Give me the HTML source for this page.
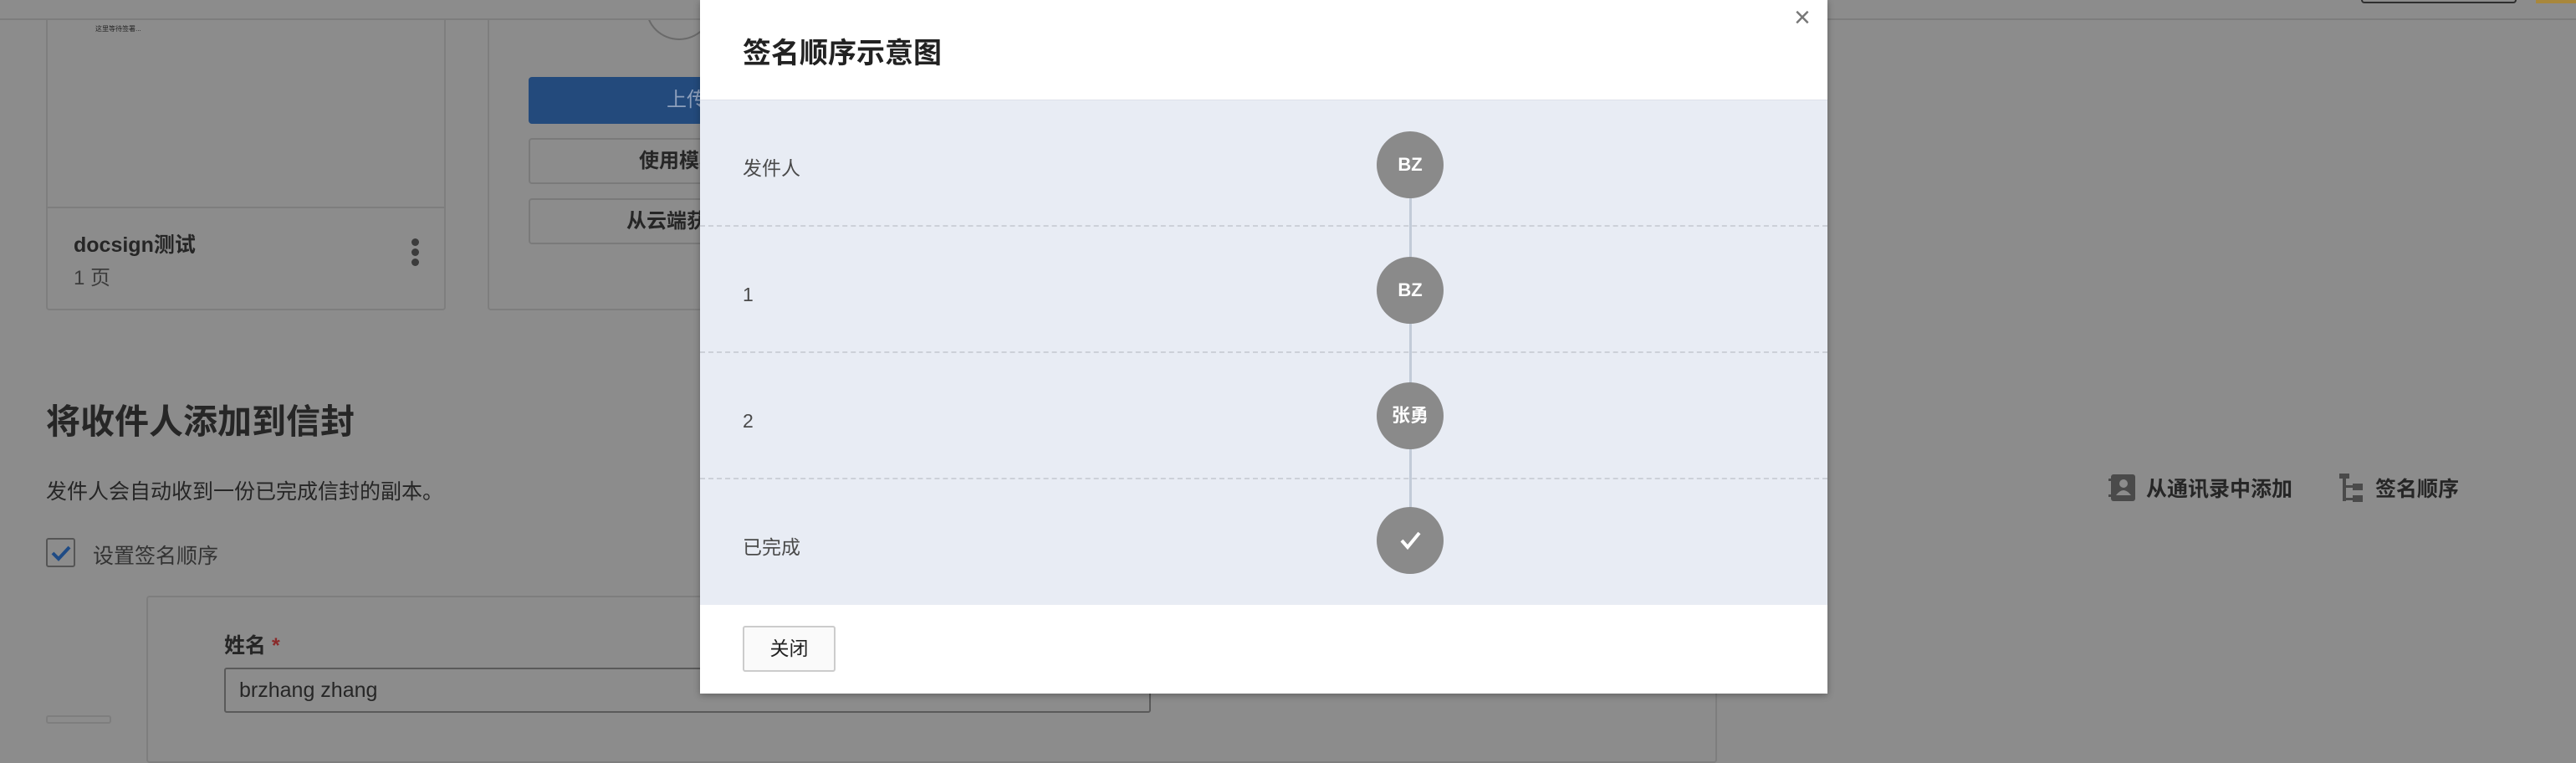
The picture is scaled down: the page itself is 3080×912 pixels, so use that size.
<!DOCTYPE html>
<html><head><meta charset="utf-8"><style>
*{box-sizing:border-box;margin:0;padding:0}
body{width:3080px;height:858px;overflow:hidden;background:#8c8c8c;font-family:"Liberation Sans","Noto Sans CJK SC",sans-serif;color:#262626;position:relative}
.a{position:absolute}
.card{border:2px solid #7e7e7e;border-radius:4px;background:#8c8c8c}
.btn{position:absolute;border:2px solid #7a7a7a;border-radius:4px;font-size:24px;font-weight:bold;text-align:center;color:#262626}
.row{position:absolute;left:0;width:1348px;height:151px;border-bottom:2px dashed #ccd0d8}
.row span{position:absolute;left:51px;top:6px;line-height:151px;font-size:23px;color:#4a4a4a}
.c{position:absolute;left:809px;width:80px;height:80px;border-radius:50%;background:#8a8a8a;color:#fff;font-weight:bold;font-size:22px;text-align:center;line-height:80px}
</style></head><body>
<div class="a card" style="left:55px;top:-20px;width:478px;height:391px"></div>
<div class="a" style="left:57px;top:247px;width:474px;height:2px;background:#7e7e7e"></div>
<div class="a" style="left:114px;top:29px;font-size:8px">这里等待签署...</div>
<div class="a" style="left:88px;top:273px;font-size:25px;font-weight:bold">docsign测试</div>
<div class="a" style="left:88px;top:312px;font-size:24px;color:#3c3c3c">1 页</div>
<div class="a" style="left:492px;top:285px;width:9px;height:9px;border-radius:50%;background:#3c3c3c;box-shadow:0 12px 0 #3c3c3c,0 24px 0 #3c3c3c"></div>
<div class="a card" style="left:583px;top:-20px;width:300px;height:391px"></div>
<div class="a" style="left:772px;top:-30px;width:80px;height:78px;border-radius:50%;border:2px solid #6a6a6a"></div>
<div class="a" style="left:0;top:0;width:3080px;height:24px;background:#8c8c8c;border-bottom:2px solid #7d7d7d"></div>
<div class="a" style="left:2823px;top:-4px;width:186px;height:8px;border:2px solid #2e2e2e;border-radius:4px"></div>
<div class="a" style="left:3032px;top:0;width:48px;height:4px;background:#a8873c"></div>
<div class="a" style="left:632px;top:92px;width:260px;height:56px;background:#234a7c;border-radius:4px;color:#8ea0bc;font-size:24px;line-height:56px;padding-left:165px">上传</div>
<div class="btn" style="left:632px;top:165px;width:260px;height:55px;line-height:51px;padding-left:130px;text-align:left">使用模板</div>
<div class="btn" style="left:632px;top:237px;width:260px;height:55px;line-height:51px;padding-left:115px;text-align:left">从云端获取</div>
<div class="a" style="left:55px;top:470px;font-size:41px;font-weight:bold">将收件人添加到信封</div>
<div class="a" style="left:55px;top:568px;font-size:25px">发件人会自动收到一份已完成信封的副本。</div>
<div class="a" style="left:55px;top:643px;width:35px;height:35px;border:2px solid #555;border-radius:3px"></div>
<svg class="a" style="left:59px;top:648px" width="28" height="26" viewBox="0 0 28 26"><path d="M4 13 L11 20 L24 6" stroke="#1f4b85" stroke-width="4" fill="none"/></svg>
<div class="a" style="left:111px;top:645px;font-size:25px;color:#333">设置签名顺序</div>
<div class="a" style="left:175px;top:712px;width:1878px;height:200px;border:2px solid #7e7e7e;border-radius:4px"></div>
<div class="a" style="left:268px;top:752px;font-size:25px;font-weight:bold">姓名 <span style="color:#8a2a2a">*</span></div>
<div class="a" style="left:268px;top:798px;width:1108px;height:54px;border:2px solid #5a5a5a;border-radius:3px;font-size:25px;line-height:50px;padding-left:16px">brzhang zhang</div>
<div class="a" style="left:55px;top:855px;width:78px;height:10px;border:2px solid #7e7e7e;border-radius:3px"></div>
<svg class="a" style="left:2521px;top:566px" width="34" height="34" viewBox="0 0 34 34"><rect x="3" y="1" width="29" height="32" rx="3" fill="#4a4a4a"/><rect x="0" y="6" width="5" height="3" fill="#4a4a4a"/><rect x="0" y="25" width="5" height="3" fill="#4a4a4a"/><circle cx="18" cy="12" r="5" fill="#8c8c8c"/><path d="M9 26 Q18 14 27 26Z" fill="#8c8c8c"/></svg>
<div class="a" style="left:2566px;top:565px;font-size:25px;font-weight:bold;color:#262626">从通讯录中添加</div>
<svg class="a" style="left:2797px;top:566px" width="30" height="34" viewBox="0 0 30 34"><rect x="0" y="0" width="12" height="6" fill="#4a4a4a"/><rect x="4" y="0" width="4" height="33" fill="#4a4a4a"/><rect x="4" y="14" width="14" height="3" fill="#4a4a4a"/><rect x="16" y="12" width="12" height="8" fill="#4a4a4a"/><rect x="4" y="29" width="14" height="3" fill="#4a4a4a"/><rect x="16" y="26" width="12" height="8" fill="#4a4a4a"/></svg>
<div class="a" style="left:2840px;top:565px;font-size:25px;font-weight:bold;color:#262626">签名顺序</div>

<div class="a" style="left:837px;top:0;width:1348px;height:829px;background:#fff;box-shadow:0 2px 8px rgba(0,0,0,.3)">
 <div class="a" style="left:51px;top:36px;font-size:34px;font-weight:bold;color:#222">签名顺序示意图</div>
 <div class="a" style="left:1308px;top:2px;font-size:34px;color:#777">×</div>
 <div class="a" style="left:0;top:119px;width:1348px;height:604px;background:#e8ecf4;border-top:1px solid #dde1ea">
  <div class="a" style="left:848px;top:77px;width:3px;height:450px;background:#c2cbd8"></div>
  <div class="row" style="top:0"><span>发件人</span></div>
  <div class="row" style="top:151px"><span>1</span></div>
  <div class="row" style="top:302px"><span>2</span></div>
  <div class="row" style="top:453px;border-bottom:none"><span>已完成</span></div>
  <div class="c" style="top:37px">BZ</div>
  <div class="c" style="top:187px">BZ</div>
  <div class="c" style="top:337px">张勇</div>
  <div class="c" style="top:486px"><svg width="80" height="80" viewBox="0 0 80 80"><path d="M30 40 L37 48 L51 31" stroke="#fff" stroke-width="4" fill="none"/></svg></div>
 </div>
 <div class="a" style="left:51px;top:748px;width:111px;height:55px;border:2px solid #ccc;border-radius:3px;background:#fafafa;font-size:23px;text-align:center;line-height:51px;color:#222">关闭</div>
</div>
</body></html>
